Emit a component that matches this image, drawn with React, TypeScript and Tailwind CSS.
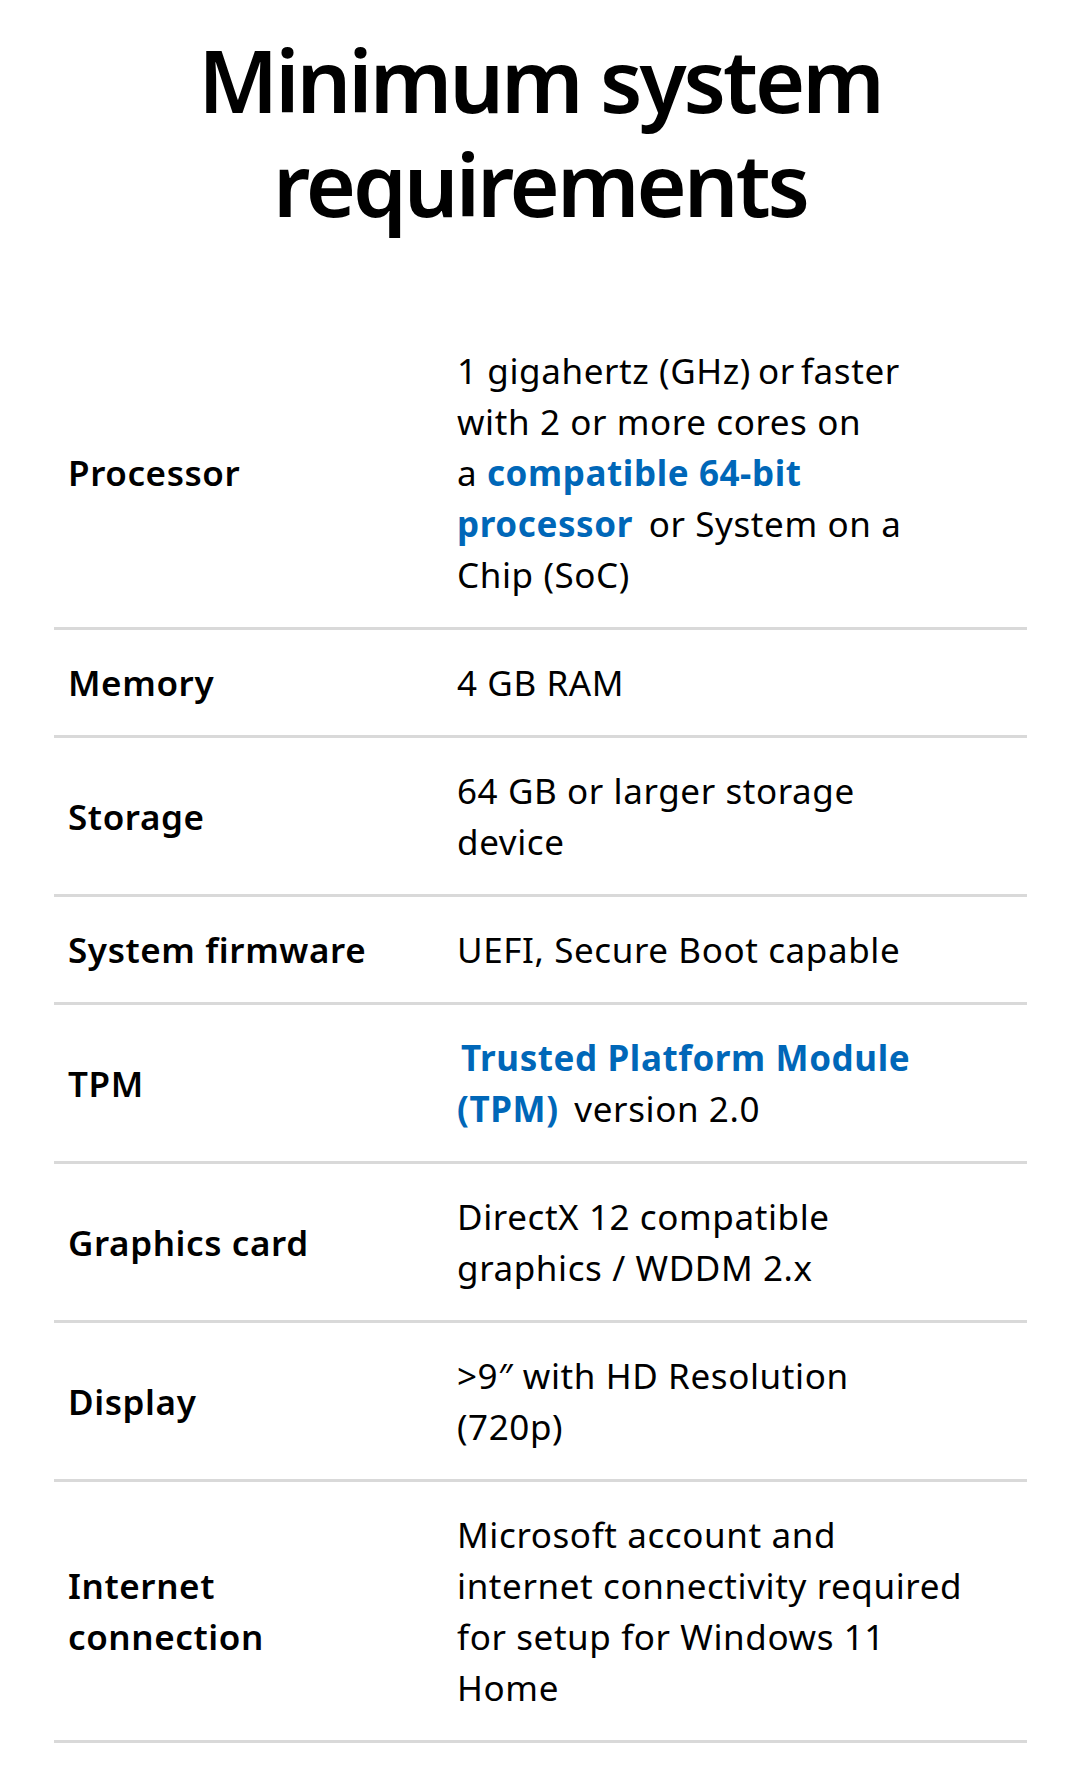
const rows: { label: React.ReactNode; value: React.ReactNode }[] = [
  {
    label: "Processor",
    value: (
      <>
        1 gigahertz (GHz)<span className="tracking-[-2px]"> </span>or<span className="tracking-[-3px]"> </span>faster
        <br />
        with 2 or more cores on
        <br />
        a <a className="font-bold text-[#0067b8]">compatible 64-bit</a>
        <br />
        <a className="font-bold text-[#0067b8]">processor</a>
        <span className="ml-[6px]"> or System on a</span>
        <br />
        Chip (SoC)
      </>
    ),
  },
  { label: "Memory", value: "4 GB RAM" },
  {
    label: "Storage",
    value: (
      <>
        64 GB or larger storage
        <br />
        device
      </>
    ),
  },
  { label: "System firmware", value: "UEFI, Secure Boot capable" },
  {
    label: "TPM",
    value: (
      <>
        <a className="ml-[4px] font-bold text-[#0067b8]">Trusted Platform Module</a>
        <br />
        <a className="font-bold text-[#0067b8]">(TPM)</a>
        <span className="ml-[6px]"> version 2.0</span>
      </>
    ),
  },
  {
    label: "Graphics card",
    value: (
      <>
        DirectX 12 compatible
        <br />
        graphics / WDDM 2.x
      </>
    ),
  },
  {
    label: "Display",
    value: (
      <>
        &gt;9″ with HD Resolution
        <br />
        (720p)
      </>
    ),
  },
  {
    label: (
      <>
        Internet
        <br />
        connection
      </>
    ),
    value: (
      <>
        Microsoft account and
        <br />
        internet connectivity required
        <br />
        for setup for Windows 11
        <br />
        Home
      </>
    ),
  },
];

export default function App() {
  return (
    <div className="min-h-[1775px] bg-white font-['Noto_Sans',sans-serif] text-black">
      <h1 className="pt-[28px] text-center text-[86px] font-semibold leading-[104px] tracking-[-3px]">
        Minimum system
        <br />
        requirements
      </h1>

      <div className="mx-[54px] mt-[82px] w-[973px]">
        {rows.map((row, i) => (
          <div
            key={i}
            className="grid grid-cols-[403px_1fr] items-center border-b-[3px] border-[#d9d9d9] py-[27px] text-[35px] leading-[51px] tracking-[0.6px]"
          >
            <div className="pl-[14px] font-semibold">{row.label}</div>
            <div>{row.value}</div>
          </div>
        ))}
      </div>
    </div>
  );
}
